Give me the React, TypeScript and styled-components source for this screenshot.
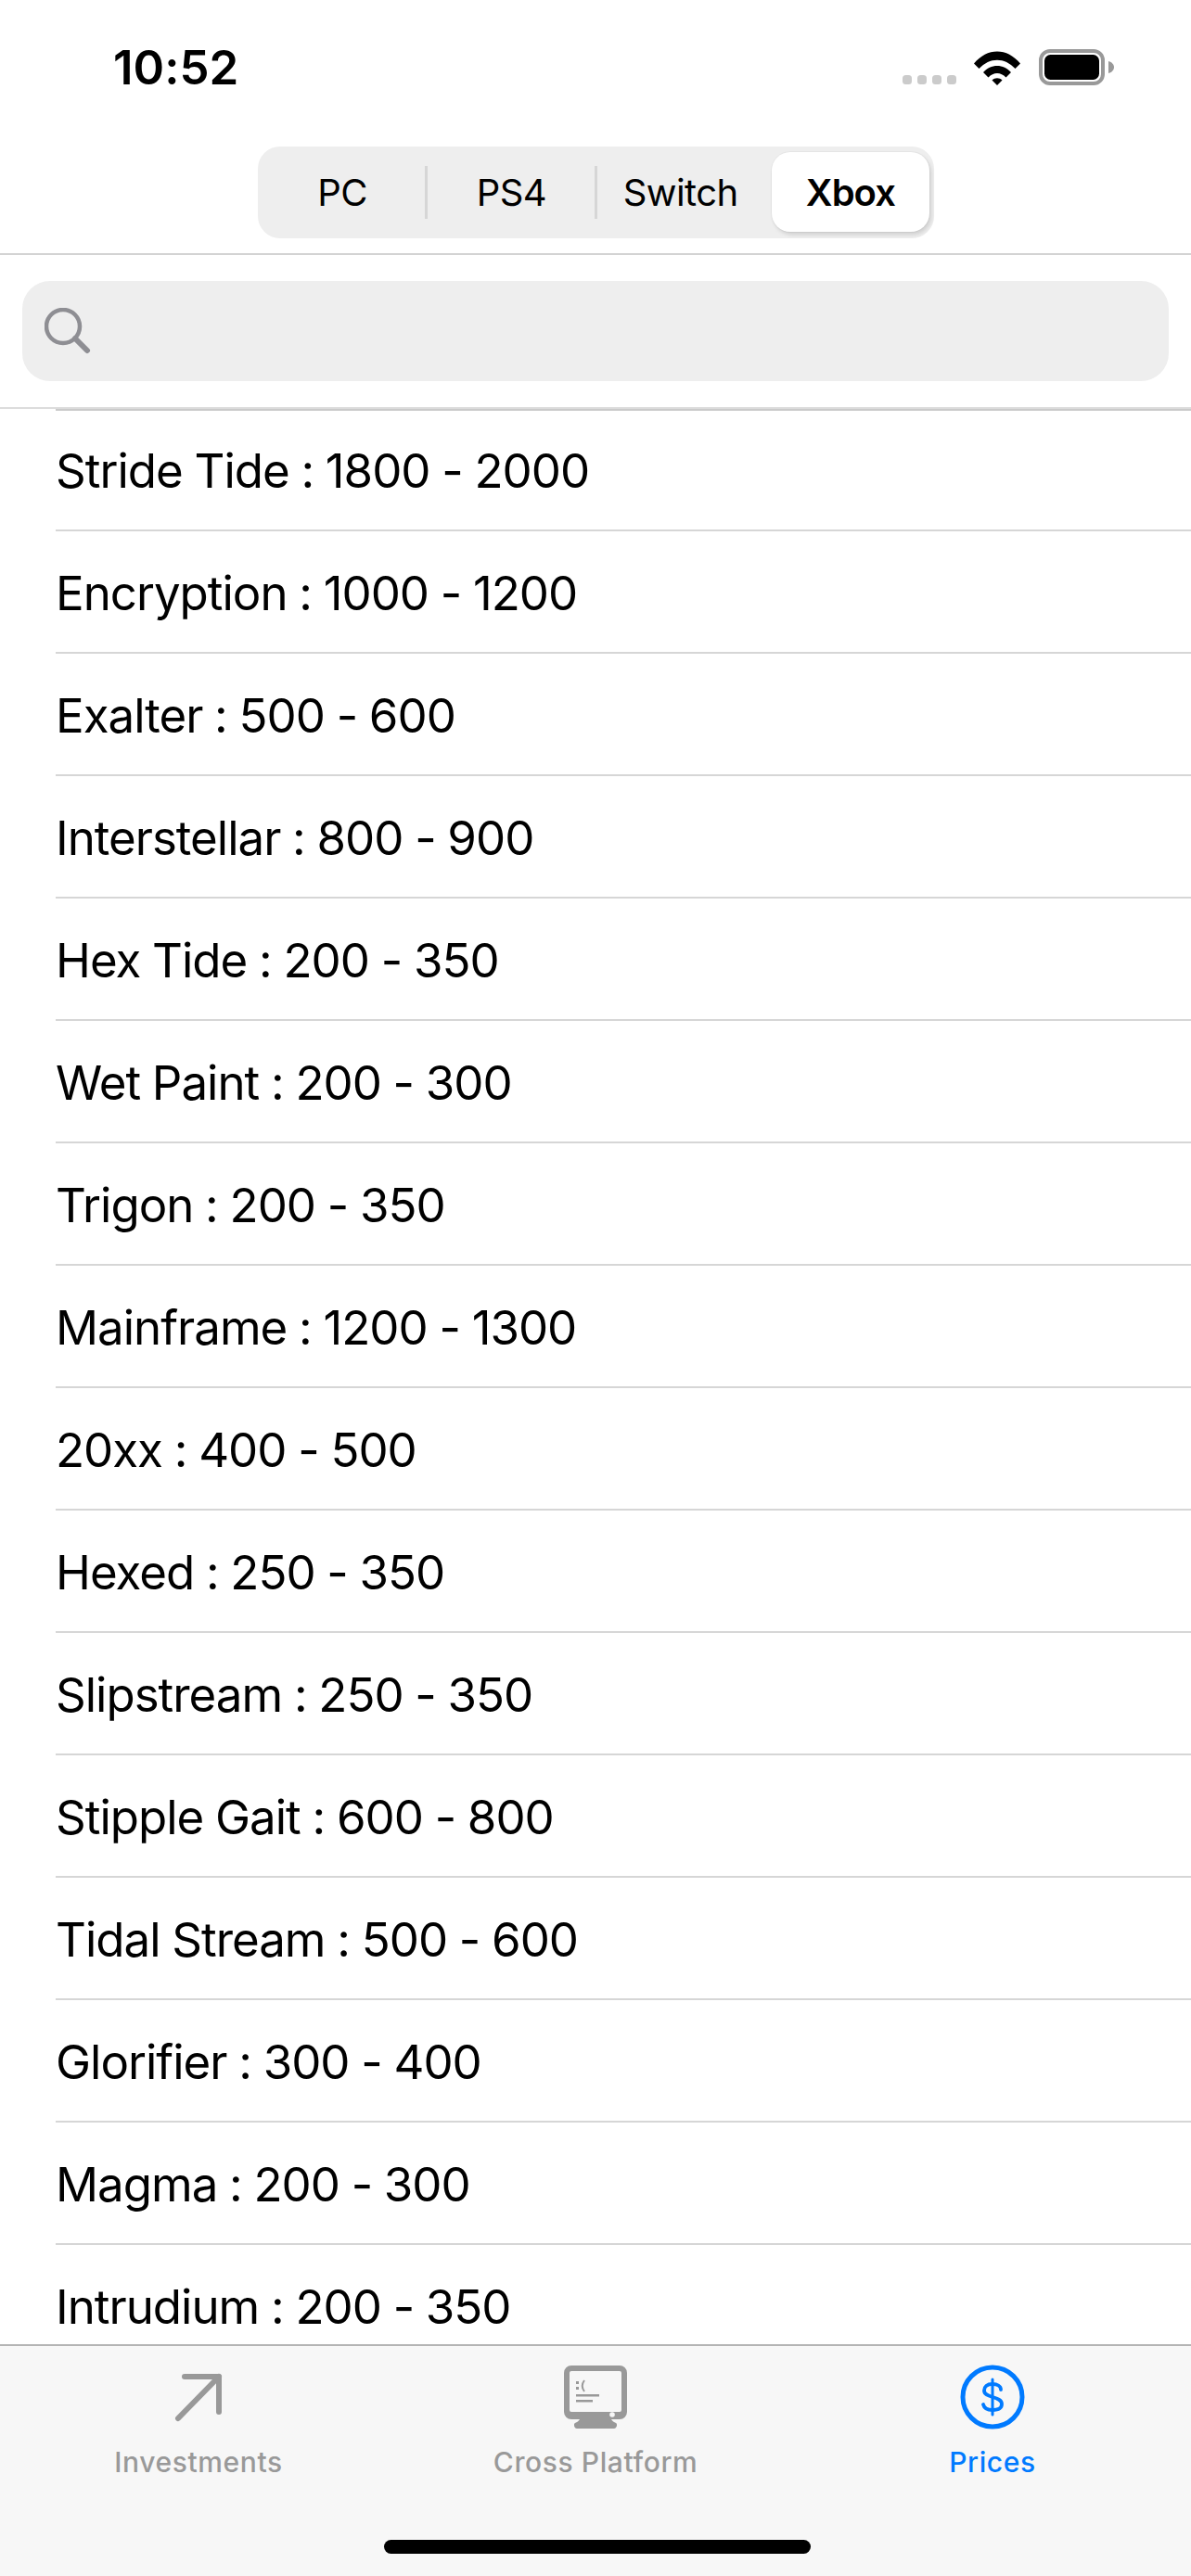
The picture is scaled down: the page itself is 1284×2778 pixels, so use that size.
import React from "react";
import styled, { createGlobalStyle } from "styled-components";

const Global = createGlobalStyle`
  html, body { margin: 0; padding: 0; background: #fff; }
  * { box-sizing: border-box; }
  body { font-family: Inter, "Liberation Sans", sans-serif; color: #000; font-feature-settings: "calt" 0; }
`;

const Page = styled.div`
  width: 1284px; height: 2778px; display: flex; flex-direction: column; overflow: hidden; background: #fff;
`;
const StatusBar = styled.div`
  height: 158px; flex: none; display: flex; justify-content: space-between; align-items: flex-start;
  padding: 53px 82px 0 122px;
`;
const Time = styled.div`
  font-size: 51px; font-weight: 600; line-height: 39px; letter-spacing: 0;
`;
const StatusIcons = styled.div`
  display: flex; align-items: flex-end; height: 39px;
`;
const SignalDots = styled.div`
  display: flex; gap: 6px; margin: 0 19px 1px 0;
`;
const Dot = styled.span`
  width: 10px; height: 10px; border-radius: 3.5px; background: #cbcbcb;
`;
const SegmentWrap = styled.div`
  flex: none; height: 117px; padding: 0 277px 16px 278px; border-bottom: 2px solid #d3d3d3;
`;
const Segmented = styled.div`
  height: 99px; display: grid; grid-template-columns: repeat(4, 1fr); background: #eeeeee; border-radius: 24px;
`;
const Segment = styled.div<{ $active?: boolean; $divider?: boolean }>`
  position: relative; display: flex; align-items: center; justify-content: center;
  font-size: 40px; font-weight: ${(p) => (p.$active ? 600 : 400)};
  letter-spacing: ${(p) => (p.$active ? "-1px" : "-0.6px")};
  ${(p) =>
    p.$active &&
    `background:#fff; border-radius:20px; margin:6px 5px 7px 7px; box-shadow:2px 3px 4px rgba(0,0,0,.13), 0 0 0 1px rgba(0,0,0,.03);`}
  ${(p) =>
    p.$divider &&
    `&::after{content:"";position:absolute;right:-1px;top:21px;bottom:21px;width:3px;background:#d6d6d6;}`}
`;
const SearchWrap = styled.div`
  flex: none; height: 166px; padding: 28px 24px 28px; border-bottom: 2px solid #dcdcdc;
`;
const SearchBar = styled.div`
  height: 108px; background: #eeeeee; border-radius: 30px; display: flex; align-items: center; padding-left: 24px;
`;
const List = styled.div`
  flex: 1; min-height: 0; overflow: hidden;
`;
const Row = styled.div`
  height: 132px; flex: none; margin-left: 60px; padding-top: 2px; display: flex; align-items: center;
  border-bottom: 2px solid #d6d6d6; font-size: 51px; line-height: 1; letter-spacing: -1px; word-spacing: -0.6px;
  &:first-child { box-shadow: inset 0 2px 0 #cacaca; }
`;
const TabBar = styled.div`
  flex: none; height: 250px; background: #f7f7f7; border-top: 2px solid #b4b4b4; position: relative;
  display: grid; grid-template-columns: repeat(3, 1fr); padding: 19px 0 0;
`;
const Tab = styled.div<{ $active?: boolean }>`
  display: flex; flex-direction: column; align-items: center; color: ${(p) => (p.$active ? "#007aff" : "#999999")};
`;
const TabIcon = styled.div`
  height: 72px; display: flex; align-items: center; justify-content: center;
`;
const TabLabel = styled.div`
  margin-top: 16px; font-size: 30px; line-height: 36px; font-weight: 500; letter-spacing: 0.6px;
`;
const HomeIndicator = styled.div`
  position: absolute; left: 414px; top: 209px; width: 460px; height: 15px; border-radius: 8px; background: #000;
`;

const items = [
  "Stride Tide : 1800 - 2000",
  "Encryption : 1000 - 1200",
  "Exalter : 500 - 600",
  "Interstellar : 800 - 900",
  "Hex Tide : 200 - 350",
  "Wet Paint : 200 - 300",
  "Trigon : 200 - 350",
  "Mainframe : 1200 - 1300",
  "20xx : 400 - 500",
  "Hexed : 250 - 350",
  "Slipstream : 250 - 350",
  "Stipple Gait : 600 - 800",
  "Tidal Stream : 500 - 600",
  "Glorifier : 300 - 400",
  "Magma : 200 - 300",
  "Intrudium : 200 - 350",
];

const Wifi = () => (
  <svg width="50" height="37" viewBox="0 0 50 37" style={{ marginRight: 20 }}>
    <path d="M0 13.5 C14 -4 36 -4 50 13.5 L44.5 19 C33 6.5 17 6.5 5.500 19 Z" fill="#000" />
    <path d="M10 23 C18 13.5 32 13.5 40 23 L34.500 28.500 C29 22.500 21 22.500 15.500 28.500 Z" fill="#000" />
    <path d="M19.500 31.500 C22.500 28.500 27.500 28.500 30.500 31.500 L25 37 Z" fill="#000" />
  </svg>
);

const Battery = () => (
  <svg width="82" height="39" viewBox="0 0 82 39">
    <rect x="2" y="2" width="67" height="35" rx="10" fill="none" stroke="#999" strokeWidth="4" />
    <rect x="6" y="6" width="59" height="27" rx="6.500" fill="#000" />
    <path d="M75 13 C79 14 81 17 81 19.500 C81 22 79 25 75 26 Z" fill="#999" />
  </svg>
);

const SearchIcon = () => (
  <svg width="50" height="50" viewBox="0 0 50 50" fill="none" stroke="#8e8e93">
    <circle cx="20" cy="20" r="18" strokeWidth="4.500" />
    <path d="M33 33 L46 46" strokeWidth="6" strokeLinecap="round" />
  </svg>
);

const ArrowIcon = () => (
  <svg width="54" height="54" viewBox="0 0 54 54" fill="none" stroke="#999999" strokeWidth="6" strokeLinecap="round" strokeLinejoin="round">
    <path d="M12 5 H49 V43" />
    <path d="M49 5 L5 50" />
  </svg>
);

const MonitorIcon = () => (
  <svg width="68" height="68" viewBox="0 0 68 68">
    <path
      fillRule="evenodd"
      d="M8 0 H60 A8 8 0 0 1 68 8 V50 A8 8 0 0 1 60 58 H51 C52 60 54 61 56 62 C58 63 57 68 54 68 H14 C11 68 10 63 12 62 C14 61 16 60 17 58 H8 A8 8 0 0 1 0 50 V8 A8 8 0 0 1 8 0 Z M8 6 A2 2 0 0 0 6 8 V48 A2 2 0 0 0 8 50 H60 A2 2 0 0 0 62 48 V8 A2 2 0 0 0 60 6 Z"
      fill="#999999"
    />
    <rect x="13" y="17" width="3" height="3" fill="#999999" />
    <rect x="13" y="23" width="3" height="3" fill="#999999" />
    <path d="M22 16 C19 20 19 24 22 28" fill="none" stroke="#999999" strokeWidth="2" />
    <rect x="13" y="31" width="25" height="2.500" fill="#999999" />
    <rect x="13" y="37" width="18" height="2.500" fill="#999999" />
    <circle cx="52" cy="53" r="2.800" fill="#f7f7f7" />
  </svg>
);

const DollarIcon = () => (
  <svg width="70" height="70" viewBox="0 0 70 70" fill="none" stroke="#007aff">
    <circle cx="35" cy="35" r="32" strokeWidth="5" />
    <path
      d="M44 27 C44 23 40 21 35 21 C29 21 26 24 26 28 C26 32 30 33.500 35 35 C40 36.500 45 38 45 42.500 C45 47 41 49 35 49 C29 49 26 47 25 43"
      strokeWidth="3.800"
      strokeLinecap="round"
    />
    <path d="M35 16 V54" strokeWidth="3" strokeLinecap="round" />
  </svg>
);

export default function App() {
  return (
    <Page>
      <Global />
      <StatusBar>
        <Time>10:52</Time>
        <StatusIcons>
          <SignalDots>
            <Dot />
            <Dot />
            <Dot />
            <Dot />
          </SignalDots>
          <Wifi />
          <Battery />
        </StatusIcons>
      </StatusBar>
      <SegmentWrap>
        <Segmented>
          <Segment $divider>PC</Segment>
          <Segment $divider>PS4</Segment>
          <Segment>Switch</Segment>
          <Segment $active>Xbox</Segment>
        </Segmented>
      </SegmentWrap>
      <SearchWrap>
        <SearchBar>
          <SearchIcon />
        </SearchBar>
      </SearchWrap>
      <List>
        {items.map((t) => (
          <Row key={t}>{t}</Row>
        ))}
      </List>
      <TabBar>
        <Tab>
          <TabIcon>
            <ArrowIcon />
          </TabIcon>
          <TabLabel>Investments</TabLabel>
        </Tab>
        <Tab>
          <TabIcon>
            <MonitorIcon />
          </TabIcon>
          <TabLabel>Cross Platform</TabLabel>
        </Tab>
        <Tab $active>
          <TabIcon>
            <DollarIcon />
          </TabIcon>
          <TabLabel>Prices</TabLabel>
        </Tab>
        <HomeIndicator />
      </TabBar>
    </Page>
  );
}
